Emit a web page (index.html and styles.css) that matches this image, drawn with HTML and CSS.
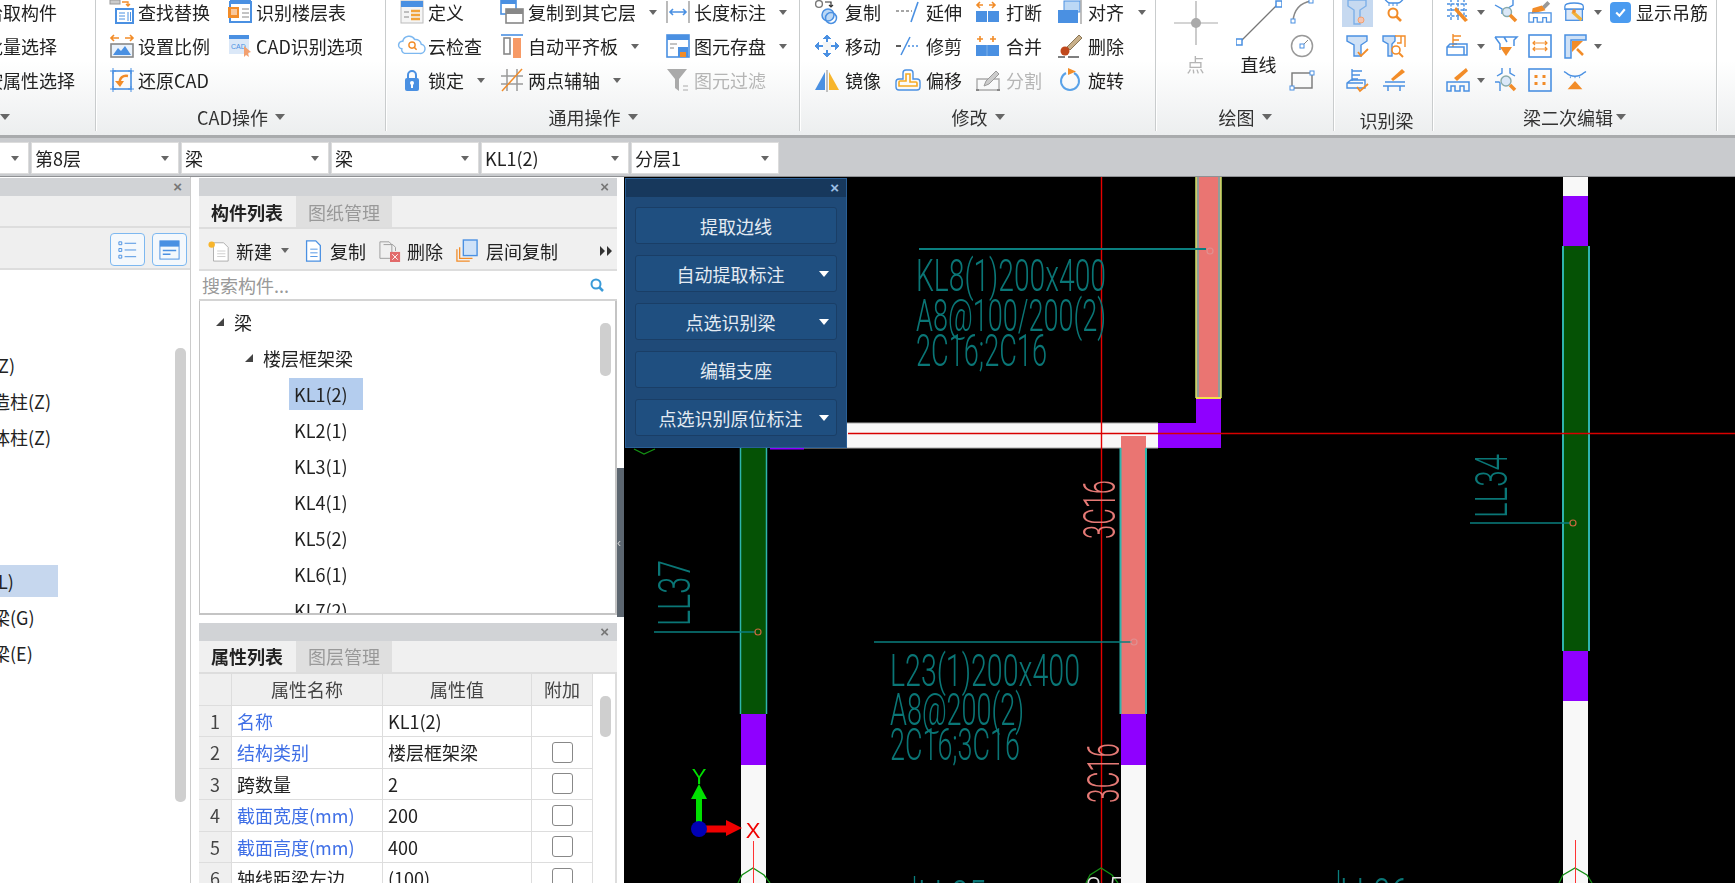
FILE: index.html
```html
<!DOCTYPE html>
<html lang="zh-CN">
<head>
<meta charset="utf-8">
<title>梁识别</title>
<link rel="stylesheet" href="styles.css">
</head>
<body>
<div class="app">
<header class="ribbon">
  <section class="rb-group g-sel">
    <div class="rb-grid">
      <div class="rb-item">拾取构件</div>
      <div class="rb-item">批量选择</div>
      <div class="rb-item">按属性选择</div>
    </div>
    <div class="rb-label">选择 <i class="caret"></i></div>
  </section>

  <section class="rb-group g-cad">
    <div class="rb-grid">
      <div class="rb-item"><svg class="ic" viewBox="0 0 24 24"><rect x="0" y="0" width="10" height="4" fill="#ccc" stroke="#999"/><path d="M12 2h6v4m-2-2l2 2 2-2" stroke="#f28c28" stroke-width="1.300"/><rect x="6" y="9" width="17" height="14" fill="#fff" stroke="#4a90e2" stroke-width="2"/><path d="M9 13h6M9 16h6M9 19h6M18 12v9M20.500 12v9" stroke="#4a90e2"/></svg><span>查找替换</span></div>
      <div class="rb-item"><svg class="ic" viewBox="0 0 24 24"><rect x="2" y="2" width="21" height="20" fill="#fff" stroke="#4a90e2" stroke-width="2"/><rect x="2" y="0" width="21" height="4" fill="#4a90e2"/><rect x="0" y="7" width="11" height="11" fill="#f28c28"/><rect x="3" y="9" width="6" height="6" fill="#f9c79a"/><path d="M14 9h7M14 13h7M14 17h7" stroke="#888"/></svg><span>识别楼层表</span></div>
      <div class="rb-item"><svg class="ic" viewBox="0 0 24 24"><path d="M1 4h8M4 1L1 4l3 3M23 4h-8M20 1l3 3-3 3" stroke="#f28c28" stroke-width="1.600"/><rect x="1" y="10" width="22" height="13" fill="#eaf2fb" stroke="#888" stroke-width="1.600"/><path d="M3 21l5-7 3 3 4-5 6 9z" fill="#4a90e2"/></svg><span>设置比例</span></div>
      <div class="rb-item"><svg class="ic" viewBox="0 0 24 24"><rect x="1" y="2" width="20" height="18" fill="#dbe8f8"/><rect x="1" y="1" width="20" height="4" fill="#4a90e2"/><text x="3" y="15" class="ic-t">CAD</text><path d="M16 12l7 6-3 1 1 4-3-2-2 2z" fill="#f2a070"/></svg><span>CAD识别选项</span></div>
      <div class="rb-item"><svg class="ic" viewBox="0 0 24 24"><rect x="3" y="3" width="18" height="18" stroke="#4a90e2" stroke-width="1.600"/><path d="M0 3h6M3 0v6M18 3h6M21 0v6M0 21h6M3 18v6M18 21h6M21 18v6" stroke="#4a90e2"/><path d="M18 8c-5-1-9 2-8 7" stroke="#f28c28" stroke-width="2.400"/><path d="M5 13h9l-4 6z" fill="#f28c28"/></svg><span>还原CAD</span></div>
      <div class="rb-item"></div>
    </div>
    <div class="rb-label">CAD操作 <i class="caret"></i></div>
  </section>

  <section class="rb-group g-gen">
    <div class="rb-grid">
      <div class="rb-item"><svg class="ic" viewBox="0 0 24 24"><rect x="1" y="1" width="22" height="22" fill="#f5f5f5" stroke="#bbb"/><rect x="1" y="1" width="22" height="6" fill="#4a90e2"/><path d="M4 12h5M4 17h5" stroke="#888"/><path d="M11 11h9M11 15h9M11 19h9" stroke="#f2a33a" stroke-width="2.400"/></svg><span>定义</span></div>
      <div class="rb-item"><svg class="ic" viewBox="0 0 24 24"><rect x="1" y="-2" width="15" height="16" stroke="#4a90e2" stroke-width="1.600" fill="#fff"/><rect x="1" y="-2" width="15" height="6" fill="#4a90e2"/><rect x="6" y="9" width="17" height="14" fill="#fff" stroke="#888" stroke-width="1.600"/><rect x="6" y="9" width="17" height="5" fill="#888"/></svg><span>复制到其它层</span><i class="caret"></i></div>
      <div class="rb-item"><svg class="ic" viewBox="0 0 24 24"><path d="M1 1v22M23 1v22" stroke="#aaa" stroke-width="1.600"/><path d="M4 12h16M7 9l-3 3 3 3M17 9l3 3-3 3" stroke="#4a90e2" stroke-width="1.600"/></svg><span>长度标注</span><i class="caret"></i></div>

      <div class="rb-item"><svg class="ic" viewBox="0 0 26 24"><path d="M2 15a4 4 0 0 1 1-8 7 7 0 0 1 13-2 6 6 0 0 1 7 5 5 5 0 0 1-2 10H5a4 4 0 0 1-3-5z" stroke="#7db8f0" stroke-width="1.600"/><circle cx="13" cy="11" r="3.400" stroke="#f28c28" stroke-width="1.500"/><path d="M15.500 13.500l2.500 2.500" stroke="#f28c28" stroke-width="1.600"/></svg><span>云检查</span></div>
      <div class="rb-item"><svg class="ic" viewBox="0 0 24 24"><path d="M1 1h22" stroke="#4a90e2" stroke-width="1.600"/><rect x="4" y="4" width="6" height="16" stroke="#888" stroke-width="1.600"/><rect x="13" y="4" width="8" height="20" fill="#f79a66"/></svg><span>自动平齐板</span><i class="caret"></i></div>
      <div class="rb-item"><svg class="ic" viewBox="0 0 24 24"><rect x="1" y="1" width="22" height="22" fill="#fff" stroke="#4a90e2" stroke-width="1.600"/><rect x="1" y="1" width="22" height="5" fill="#4a90e2"/><path d="M4 10h7M4 14h4" stroke="#888"/><rect x="12" y="13" width="10" height="10" fill="#4a90e2"/><rect x="14" y="18" width="6" height="5" fill="#f28c28"/></svg><span>图元存盘</span><i class="caret"></i></div>

      <div class="rb-item"><svg class="ic" viewBox="0 0 24 24"><path d="M8 11V7a4 4 0 0 1 8 0v4" stroke="#4a90e2" stroke-width="2"/><rect x="5" y="10" width="14" height="13" rx="2" fill="#4a90e2"/><circle cx="12" cy="15" r="2" fill="#fff"/><rect x="11" y="15" width="2" height="5" fill="#fff"/></svg><span>锁定</span><i class="caret"></i></div>
      <div class="rb-item"><svg class="ic" viewBox="0 0 24 24"><path d="M7 1v22M17 1v22M1 8h22M1 16h22" stroke="#999" stroke-width="1.500"/><path d="M2 23L22 1" stroke="#f28c28" stroke-width="1.500"/></svg><span>两点辅轴</span><i class="caret"></i></div>
      <div class="rb-item off"><svg class="ic" viewBox="0 0 24 24"><path d="M1 1h20l-8 10v12l-4-3v-9z" fill="#aaa"/><path d="M17 18h5M17 22h5" stroke="#aaa"/></svg><span>图元过滤</span></div>
    </div>
    <div class="rb-label">通用操作 <i class="caret"></i></div>
  </section>

  <section class="rb-group g-mod">
    <div class="rb-grid">
      <div class="rb-item"><svg class="ic" viewBox="0 0 26 24"><circle cx="5" cy="4" r="3.400" stroke="#777" stroke-width="1.400"/><path d="M11 2h6v5m-2-2l2 2 2-2" stroke="#333" stroke-width="1.200"/><circle cx="14" cy="15" r="6" fill="#bcd8f5" stroke="#4a90e2" stroke-width="1.500"/><circle cx="17" cy="18" r="5.500" stroke="#4a90e2" stroke-width="1.500"/></svg><span>复制</span></div>
      <div class="rb-item"><svg class="ic" viewBox="0 0 26 24"><path d="M1 11h16" stroke="#888" stroke-width="1.500" stroke-dasharray="3 2"/><path d="M23 2l-7 20" stroke="#4a90e2" stroke-width="1.600"/></svg><span>延伸</span></div>
      <div class="rb-item"><svg class="ic" viewBox="0 0 26 24"><path d="M2 5h6M5 2L2 5l3 3M20 5h-6M17 2l3 3-3 3" stroke="#f28c28" stroke-width="1.600"/><rect x="1" y="11" width="11" height="11" fill="#4a90e2"/><rect x="13" y="11" width="11" height="11" fill="#4a90e2"/></svg><span>打断</span></div>
      <div class="rb-item"><svg class="ic" viewBox="0 0 26 24"><rect x="7" y="1" width="16" height="11" fill="#bcd8f5" stroke="#4a90e2"/><rect x="1" y="10" width="20" height="13" fill="#4a90e2"/><path d="M24 -2v26" stroke="#aaa" stroke-width="1.500"/></svg><span>对齐</span><i class="caret"></i></div>

      <div class="rb-item"><svg class="ic" viewBox="0 0 26 24"><path d="M13 1v22M1 12h24" stroke="#4a90e2" stroke-width="2"/><path d="M9 5l4-4 4 4M9 19l4 4 4-4M5 8l-4 4 4 4M21 8l4 4-4 4" fill="#4a90e2" stroke="#4a90e2"/><rect x="9" y="8" width="8" height="8" fill="#f3f5f6"/></svg><span>移动</span></div>
      <div class="rb-item"><svg class="ic" viewBox="0 0 26 24"><path d="M1 12h5" stroke="#333" stroke-width="1.600"/><path d="M15 3L6 21" stroke="#4a90e2" stroke-width="1.600"/><path d="M13 12h12" stroke="#4a90e2" stroke-width="1.500" stroke-dasharray="2 2"/></svg><span>修剪</span></div>
      <div class="rb-item"><svg class="ic" viewBox="0 0 26 24"><path d="M2 5h6M5 2v6M15 5h6M18 2v6" stroke="#f28c28" stroke-width="1.600"/><rect x="1" y="11" width="23" height="11" fill="#4a90e2"/><path d="M12 11v11" stroke="#7db0e8"/></svg><span>合并</span></div>
      <div class="rb-item"><svg class="ic" viewBox="0 0 26 24"><path d="M1 23h7M11 23h11" stroke="#555" stroke-width="1.300"/><path d="M10 13l12-12 3 3-12 12z" fill="#c8b08a" stroke="#8a7555"/><circle cx="8" cy="17" r="4.500" fill="#c0481c"/></svg><span>删除</span></div>

      <div class="rb-item"><svg class="ic" viewBox="0 0 26 24"><path d="M11 4L1 22h10z" fill="#4a90e2"/><path d="M13 2v22" stroke="#888"/><path d="M15 4l10 18H15z" fill="#f7b52c"/></svg><span>镜像</span></div>
      <div class="rb-item"><svg class="ic" viewBox="0 0 26 24"><path d="M8 5a3 3 0 0 1 3-3h4a3 3 0 0 1 3 3v6h4a3 3 0 0 1 3 3v5a3 3 0 0 1-3 3H4a3 3 0 0 1-3-3v-5a3 3 0 0 1 3-3h4z" stroke="#4a90e2" stroke-width="1.400"/><path d="M11 6v7H5a1 1 0 0 0-1 1v4h18v-3a1 1 0 0 0-1-1h-6V6z" stroke="#f5ab25" stroke-width="1.600"/></svg><span>偏移</span></div>
      <div class="rb-item off"><svg class="ic" viewBox="0 0 26 24"><path d="M2 11h22v11H2z" stroke="#aaa" stroke-width="1.400"/><path d="M1 22h3M22 22h3" stroke="#888" stroke-width="2"/><path d="M9 18l2-5L21 3l3 3-10 10z" fill="#ccc" stroke="#999"/></svg><span>分割</span></div>
      <div class="rb-item"><svg class="ic" viewBox="0 0 26 24"><path d="M9 5a9 9 0 1 0 8 0" stroke="#5aa2e8" stroke-width="2"/><path d="M11 0l8 3.500-8 3.500z" fill="#f28c28"/></svg><span>旋转</span></div>
    </div>
    <div class="rb-label">修改 <i class="caret"></i></div>
  </section>

  <section class="rb-group g-draw">
    <div class="rb-grid">
      <div class="big off"><svg class="ic-big" viewBox="0 0 46 46"><path d="M23 1v44M1 23h44" stroke="#aaa" stroke-width="1.200"/><circle cx="23" cy="23" r="5" fill="#aaa"/></svg><span>点</span></div>
      <div class="big"><svg class="ic-big" viewBox="0 0 46 46"><path d="M3 43L43 3" stroke="#777" stroke-width="1.200"/><rect x="0" y="39" width="6" height="6" fill="#fff" stroke="#4a90e2" stroke-width="1.500"/><rect x="40" y="1" width="6" height="6" fill="#fff" stroke="#4a90e2" stroke-width="1.500"/></svg><span>直线</span></div>
      <div class="rb-item"><svg class="ic" viewBox="0 0 24 24"><path d="M3 21C4 10 10 3 21 1" stroke="#888" stroke-width="1.500"/><rect x="1" y="19" width="4" height="4" fill="#fff" stroke="#4a90e2"/><rect x="19" y="-1" width="4" height="4" fill="#fff" stroke="#4a90e2"/></svg></div>
      <div class="rb-item"><svg class="ic" viewBox="0 0 24 24"><circle cx="12" cy="12" r="10.500" stroke="#999" stroke-width="1.500"/><path d="M12 12l6-6" stroke="#888"/><rect x="10" y="10" width="4" height="4" fill="#fff" stroke="#4a90e2"/></svg></div>
      <div class="rb-item"><svg class="ic" viewBox="0 0 24 24"><rect x="2" y="5" width="20" height="15" stroke="#777" stroke-width="1.400"/><rect x="0" y="18" width="4" height="4" fill="#fff" stroke="#4a90e2"/><rect x="20" y="3" width="4" height="4" fill="#fff" stroke="#4a90e2"/></svg></div>
    </div>
    <div class="rb-label">绘图 <i class="caret"></i></div>
  </section>

  <section class="rb-group g-rec">
    <div class="rb-grid">
      <div class="rb-item active"><svg class="ic" viewBox="0 0 24 24"><path d="M3 -2h18v6l-6 4v14H9V8L3 4z" stroke="#7db0e8" stroke-width="1.400"/><circle cx="16" cy="18" r="3" fill="#f4c4b0" stroke="#f2a070"/></svg></div>
      <div class="rb-item"><svg class="ic" viewBox="0 0 24 24"><path d="M2 -2c2 3 4 5 6 5h8c2 0 4-2 6-5" stroke="#4a90e2" stroke-width="1.400"/><path d="M7 3v3M11 3v3M15 3v3" stroke="#4a90e2"/><circle cx="11" cy="13" r="4.500" stroke="#f28c28" stroke-width="2"/><path d="M14 16l5 5" stroke="#f28c28" stroke-width="2.600"/></svg></div>
      <div class="rb-item"><svg class="ic" viewBox="0 0 24 24"><path d="M1 2h20v5l-6 4v11H8V11L1 7z" fill="#cfe1f6" stroke="#4a90e2" stroke-width="1.400"/><path d="M12 18l3 4 7-7" stroke="#f28c28" stroke-width="1.800"/></svg></div>
      <div class="rb-item"><svg class="ic" viewBox="0 0 24 24"><path d="M1 2h12v5l-3 3v12H6V10L1 7z" fill="#cfe1f6" stroke="#4a90e2" stroke-width="1.400"/><path d="M13 2h10v11M19 2v7h-4" stroke="#f28c28" stroke-width="1.400"/><circle cx="14" cy="16" r="4" fill="#fff" stroke="#f28c28" stroke-width="1.600"/><path d="M17 19l4 4" stroke="#f28c28" stroke-width="2"/></svg></div>
      <div class="rb-item"><svg class="ic" viewBox="0 0 24 24"><path d="M6 1v12M6 3h10M6 7h8M6 11h6" stroke="#4a90e2" stroke-width="1.400"/><path d="M1 15l4-3h14v8H1zM1 15h16" stroke="#4a90e2" stroke-width="1.400"/><path d="M11 19l3 4 8-7" stroke="#f28c28" stroke-width="1.800"/></svg></div>
      <div class="rb-item"><svg class="ic" viewBox="0 0 24 24"><path d="M9 11L20 1l3 3-12 9z" fill="#f28c28"/><path d="M3 14h20M1 18h22M6 18v5M18 18v5" stroke="#4a90e2" stroke-width="1.500"/></svg></div>
    </div>
    <div class="rb-label plain">识别梁</div>
  </section>

  <section class="rb-group g-edit">
    <div class="rb-grid">
      <div class="rb-item"><svg class="ic" viewBox="0 0 24 24"><path d="M5 -1v21M12 -1v21M18 -1v21M1 4h20M1 10h20M1 16h20" stroke="#4a90e2" stroke-width="1.400" stroke-dasharray="3 1.500"/><path d="M10 7l12 13-3 2L8 10z" fill="#f28c28"/></svg><i class="caret"></i></div>
      <div class="rb-item"><svg class="ic" viewBox="0 0 24 24"><path d="M1 -1h18v6l-5 3M1 5l7 4v5" stroke="#4a90e2" stroke-width="1.400"/><circle cx="13" cy="12" r="4.500" fill="#dbe8f8" stroke="#8aa" stroke-width="1.400"/><path d="M16 15l6 6" stroke="#f28c28" stroke-width="3.500"/></svg></div>
      <div class="rb-item"><svg class="ic" viewBox="0 0 26 24"><path d="M15 6l6-6 3 3-6 6z" fill="#999"/><path d="M5 8l10-3 4 5-15 4z" fill="#f28c28"/><path d="M1 23V13h24v10h-5v-5h-4v5h-6v-5H6v5z" stroke="#4a90e2" stroke-width="1.400"/></svg></div>
      <div class="rb-item"><svg class="ic" viewBox="0 0 26 24"><path d="M2 6c0-5 20-5 20 0v3H2z" stroke="#4a90e2" stroke-width="1.400"/><rect x="3" y="9" width="18" height="12" fill="#dbe8f8" stroke="#4a90e2" stroke-width="1.400"/><path d="M11 10l10 9-2 3-10-9z" fill="#f2b23a"/><circle cx="12" cy="11" r="2" fill="#f28c28"/></svg><i class="caret"></i></div>
      <label class="check"><i class="box"><svg viewBox="0 0 14 14"><path d="M3 7l3 3 5-6" stroke="#fff" stroke-width="2"/></svg></i><span>显示吊筋</span></label>

      <div class="rb-item"><svg class="ic" viewBox="0 0 24 24"><path d="M7 0v13M7 2h8M7 6h6M7 10h4" stroke="#f28c28" stroke-width="1.400"/><path d="M1 13l3-3h17v11H1zM1 13h17v8" stroke="#4a90e2" stroke-width="1.500"/></svg><i class="caret"></i></div>
      <div class="rb-item"><svg class="ic" viewBox="0 0 24 24"><path d="M1 3h22l-3 3v6M1 3l5 7v6M10 3l3 5" stroke="#4a90e2" stroke-width="1.500"/><path d="M6 13h12l-6 9z" fill="#f28c28"/></svg></div>
      <div class="rb-item"><svg class="ic" viewBox="0 0 24 24"><rect x="1" y="1" width="22" height="22" stroke="#4a90e2" stroke-width="1.600"/><path d="M5 9h14M5 15h14M7 7L5 9l2 2M17 7l2 2-2 2M7 13l-2 2 2 2M17 13l2 2-2 2" stroke="#f28c28" stroke-width="1.200"/></svg></div>
      <div class="rb-item"><svg class="ic" viewBox="0 0 24 24"><path d="M2 24V1h21v5H8v18z" fill="#cfe1f6" stroke="#4a90e2" stroke-width="1.500"/><path d="M9 7h11L9 18z" fill="#f28c28"/><path d="M14 15l6 6" stroke="#f28c28" stroke-width="2.500"/></svg><i class="caret"></i></div>
      <div class="rb-item"></div>

      <div class="rb-item"><svg class="ic" viewBox="0 0 24 24"><path d="M8 10L20 0l2 3-11 10z" fill="#f28c28"/><path d="M1 23V14h22v9h-5v-5h-4v5H9v-5H5v5z" stroke="#4a90e2" stroke-width="1.500"/></svg><i class="caret"></i></div>
      <div class="rb-item"><svg class="ic" viewBox="0 0 24 24"><path d="M8 0v5L3 8M16 0v5l5 3M1 14h4l1 1v8" stroke="#4a90e2" stroke-width="1.400"/><circle cx="12" cy="13" r="5" fill="#dbe8f8" stroke="#8aa" stroke-width="1.400"/><path d="M16 17l5 5" stroke="#f28c28" stroke-width="3.500"/></svg></div>
      <div class="rb-item"><svg class="ic" viewBox="0 0 24 24"><rect x="1" y="1" width="22" height="22" stroke="#4a90e2" stroke-width="1.600"/><rect x="6.500" y="7" width="3" height="3" fill="#f28c28"/><rect x="14.500" y="7" width="3" height="3" fill="#f28c28"/><rect x="6.500" y="14" width="3" height="3" fill="#f28c28"/><rect x="14.500" y="14" width="3" height="3" fill="#f28c28"/></svg></div>
      <div class="rb-item"><svg class="ic" viewBox="0 0 26 24"><path d="M1 3c3 0 3 5 12 5s9-5 12-5" stroke="#4a90e2" stroke-width="1.500"/><path d="M8 8v2M13 8v2M18 8v2" stroke="#4a90e2"/><path d="M5 22l8-9 8 9z" fill="#f28c28"/></svg></div>
      <div class="rb-item"></div>
    </div>
    <div class="rb-label">梁二次编辑 <i class="caret"></i></div>
  </section>
</header>

<nav class="selectors">
  <div class="select first"><span></span></div>
  <div class="select"><span>第8层</span></div>
  <div class="select"><span>梁</span></div>
  <div class="select"><span>梁</span></div>
  <div class="select"><span>KL1(2)</span></div>
  <div class="select"><span>分层1</span></div>
</nav>

<main class="workspace">
  <aside class="nav-panel">
    <div class="panel-head"><b class="x">×</b></div>
    <div class="nav-blank"></div>
    <div class="nav-tools">
      <span class="view-btn"><svg viewBox="0 0 24 24"><path d="M3 4h3v3H3zM3 11h3v3H3zM3 18h3v3H3z" stroke="#4a90e2"/><path d="M9 5.500h12M9 12.500h12M9 19.500h12" stroke="#4a90e2"/></svg></span>
      <span class="view-btn"><svg viewBox="0 0 24 24"><rect x="2" y="3" width="20" height="19" stroke="#4a90e2"/><rect x="2" y="3" width="20" height="6" fill="#4a90e2"/><path d="M5 13h14M5 17h8" stroke="#4a90e2" stroke-width="1.500"/></svg></span>
    </div>
    <ul class="nav-list">
      <li>柱(Z)</li>
      <li>构造柱(Z)</li>
      <li>砌体柱(Z)</li>
      <li class="spacer"></li>
      <li class="spacer"></li>
      <li class="spacer"></li>
      <li class="sel">梁(L)</li>
      <li>连梁(G)</li>
      <li>圈梁(E)</li>
    </ul>
    <i class="thumb nav-thumb"></i>
  </aside>

  <div class="mid">
    <section class="list-panel">
      <div class="panel-head"><b class="x">×</b></div>
      <div class="tabs"><span class="tab on">构件列表</span><span class="tab">图纸管理</span></div>
      <div class="list-tools">
        <span class="tool t-new"><svg class="ic2" viewBox="0 0 24 24"><path d="M6 3h11l5 5v15H6z" fill="#fff" stroke="#aaa"/><path d="M10 12h9M10 15h9M10 18h9" stroke="#ccc"/><circle cx="4" cy="5" r="3.500" fill="#f7b52c"/></svg>新建<i class="caret"></i></span>
        <span class="tool t-copy"><svg class="ic2" viewBox="0 0 24 24"><path d="M5 1h10l5 5v17H5z" fill="#fff" stroke="#4a90e2" stroke-width="1.400"/><path d="M9 10h8M9 14h8M9 18h8" stroke="#4a90e2"/></svg>复制</span>
        <span class="tool t-del"><svg class="ic2" viewBox="0 0 24 24"><path d="M1 2h10l3 3v15H1z" stroke="#999"/><path d="M5 5h10l3 3v4" stroke="#999"/><rect x="12" y="13" width="11" height="11" fill="#e26a6a"/><path d="M14.500 15.500l6 6M20.500 15.500l-6 6" stroke="#fff"/></svg>删除</span>
        <span class="tool t-floor"><svg class="ic2" viewBox="0 0 24 24"><path d="M1 10v13h14M4 8v12h14" stroke="#f28c28" stroke-width="1.400"/><rect x="8" y="0" width="15" height="17" fill="#cfe2f8" stroke="#4a90e2" stroke-width="1.500"/></svg>层间复制</span>
        <svg class="more" viewBox="0 0 12 10"><path d="M0 0l5 5-5 5zM7 0l5 5-5 5z" fill="#333"/></svg>
      </div>
      <div class="search"><span>搜索构件...</span><svg viewBox="0 0 16 16"><circle cx="7" cy="7" r="4.500" stroke="#3a9bd8" stroke-width="2"/><path d="M10 10l4 4" stroke="#3a9bd8" stroke-width="2.500"/></svg></div>
      <div class="tree">
        <div class="node lv0"><i class="tri"></i>梁</div>
        <div class="node lv1"><i class="tri"></i>楼层框架梁</div>
        <div class="node lv2"><span class="leaf sel">KL1(2)</span></div>
        <div class="node lv2"><span class="leaf">KL2(1)</span></div>
        <div class="node lv2"><span class="leaf">KL3(1)</span></div>
        <div class="node lv2"><span class="leaf">KL4(1)</span></div>
        <div class="node lv2"><span class="leaf">KL5(2)</span></div>
        <div class="node lv2"><span class="leaf">KL6(1)</span></div>
        <div class="node lv2"><span class="leaf">KL7(2)</span></div>
        <i class="thumb tree-thumb"></i>
      </div>
    </section>

    <section class="prop-panel">
      <div class="panel-head"><b class="x">×</b></div>
      <div class="tabs"><span class="tab on">属性列表</span><span class="tab">图层管理</span></div>
      <div class="prop-body">
        <div class="prop-grid">
          <div class="th"></div><div class="th">属性名称</div><div class="th">属性值</div><div class="th">附加</div>
          <div class="num">1</div><div class="td link">名称</div><div class="td">KL1(2)</div><div class="td"></div>
          <div class="num">2</div><div class="td link">结构类别</div><div class="td">楼层框架梁</div><div class="td"><i class="cb"></i></div>
          <div class="num">3</div><div class="td">跨数量</div><div class="td">2</div><div class="td"><i class="cb"></i></div>
          <div class="num">4</div><div class="td link">截面宽度(mm)</div><div class="td">200</div><div class="td"><i class="cb"></i></div>
          <div class="num">5</div><div class="td link">截面高度(mm)</div><div class="td">400</div><div class="td"><i class="cb"></i></div>
          <div class="num">6</div><div class="td">轴线距梁左边...</div><div class="td">(100)</div><div class="td"><i class="cb"></i></div>
        </div>
        <i class="thumb prop-thumb"></i>
      </div>
    </section>
  </div>

  <div class="splitter"><i class="s-gray">‹</i></div>

  <section class="canvas">
    <svg class="cad" viewBox="624 177 1111 706" preserveAspectRatio="none">
      <!-- horizontal beam -->
      <rect x="800" y="423" width="358" height="25" fill="#f8f8f8"/>
      <path d="M800 423h358M800 448h358" stroke="#aaa"/>
      <rect x="770" y="448" width="34" height="1.500" fill="#8f00ff"/>
      <path d="M634 449l10 5 11-5" stroke="#149014" stroke-width="1.300"/>
      <path d="M1158 423h38v-25h25v50h-63z" fill="#8f00ff"/>
      <!-- upper pink -->
      <rect x="1196" y="177" width="25" height="221" fill="#ea7572"/>
      <path d="M1196 177v221M1221 177v221" stroke="#c8e66a" stroke-width="1.500"/>
      <path d="M1198 177v221M1219 177v221" stroke="#39c6bd" stroke-width="1"/>
      <path d="M1196 398h25" stroke="#f2e34a" stroke-width="2"/>
      <!-- lower pink -->
      <rect x="1121" y="436" width="25" height="278" fill="#ea7572"/>
      <path d="M1120.500 448v266M1146 448v266" stroke="#2fb5ad" stroke-width="2"/>
      <rect x="1121" y="714" width="25" height="51" fill="#8f00ff"/>
      <rect x="1121" y="765" width="25" height="118" fill="#f8f8f8"/>
      <!-- left green -->
      <rect x="741" y="448" width="26" height="266" fill="#055205"/>
      <path d="M740.500 448v266M766.500 448v266" stroke="#2fb5ad" stroke-width="1.500"/>
      <rect x="741" y="714" width="25" height="51" fill="#8f00ff"/>
      <rect x="741" y="765" width="25" height="118" fill="#f8f8f8"/>
      <!-- right column -->
      <rect x="1563" y="177" width="25" height="19" fill="#f8f8f8"/>
      <rect x="1563" y="196" width="25" height="50" fill="#8f00ff"/>
      <rect x="1563" y="246" width="26" height="405" fill="#055205"/>
      <path d="M1563 246v405M1589 246v405" stroke="#2fb5ad" stroke-width="2"/>
      <rect x="1563" y="651" width="25" height="50" fill="#8f00ff"/>
      <rect x="1563" y="701" width="25" height="182" fill="#f8f8f8"/>
      <!-- cross-hair -->
      <path d="M1101.500 177v706" stroke="#e60000" stroke-width="1.400"/>
      <path d="M848 433.500h887" stroke="#d80000" stroke-width="1.600"/>
      <!-- leaders -->
      <g stroke="#0a7f7f" fill="none" stroke-width="1.300">
        <path d="M919 249h287" stroke-width="2"/>
        <path d="M654 632h101"/>
        <path d="M874 642h258"/>
        <path d="M1470 523h100"/>
        <path d="M1338.500 870v14M914.500 876v8"/>
      </g>
      <g fill="none" stroke="#c7693e" stroke-width="1.200">
        <circle cx="758" cy="632" r="3"/>
        <circle cx="1573" cy="523" r="3"/>
        <circle cx="1210" cy="251" r="3" stroke="#e09090"/>
        <circle cx="1134" cy="642" r="3" stroke="#e09090"/>
      </g>
      <!-- annotation text -->
      <g class="cad-text">
        <text x="916" y="291" textLength="190" lengthAdjust="spacingAndGlyphs">KL8(1)200x400</text>
        <text x="916" y="331" textLength="190" lengthAdjust="spacingAndGlyphs">A8@100/200(2)</text>
        <text x="916" y="366" textLength="131" lengthAdjust="spacingAndGlyphs">2C16;2C16</text>
        <text x="890" y="686" textLength="190" lengthAdjust="spacingAndGlyphs">L23(1)200x400</text>
        <text x="890" y="725" textLength="134" lengthAdjust="spacingAndGlyphs">A8@200(2)</text>
        <text x="890" y="760" textLength="130" lengthAdjust="spacingAndGlyphs">2C16;3C16</text>
        <text transform="translate(690 626) rotate(-90)" textLength="66" lengthAdjust="spacingAndGlyphs">LL37</text>
        <text transform="translate(1507 518) rotate(-90)" textLength="64" lengthAdjust="spacingAndGlyphs">LL34</text>
        <text x="1340" y="910" textLength="68" lengthAdjust="spacingAndGlyphs">LL26</text>
        <text x="918" y="912" textLength="68" lengthAdjust="spacingAndGlyphs">LL35</text>
      </g>
      <g class="cad-text pink">
        <text transform="translate(1115 539) rotate(-90)" textLength="59" lengthAdjust="spacingAndGlyphs">3C16</text>
        <text transform="translate(1119 803) rotate(-90)" textLength="60" lengthAdjust="spacingAndGlyphs">3C16</text>
      </g>
      <!-- axis marks -->
      <g fill="none" stroke="#149014" stroke-width="1.300">
        <path d="M738 883l4-8 11-7 11 7 6 8"/>
        <path d="M1086 883l4-8 11-7 11 7 6 8"/>
        <path d="M1559 883l4-8 12-7 12 7 5 8"/>
      </g>
      <text class="axis-no" x="1086" y="897">2.5</text>
      <path d="M753.500 841v42M1575.500 840v43" stroke="#f33"/>
      <!-- UCS -->
      <path d="M699 830v-36" stroke="#00e000" stroke-width="6"/>
      <path d="M699 784l-8 15h16z" fill="#00e000"/>
      <path d="M699 829h30" stroke="#f00000" stroke-width="7"/>
      <path d="M742 828l-16-8v16z" fill="#f00000"/>
      <circle cx="699" cy="829" r="8" fill="#0000b4"/>
      <text class="ucs y" x="699" y="784">Y</text>
      <text class="ucs x" x="753" y="838">X</text>
    </svg>

    <div class="float">
      <div class="float-head"><b class="x">×</b></div>
      <div class="float-body">
        <button class="fbtn"><span>提取边线</span></button>
        <button class="fbtn"><span>自动提取标注</span><i></i></button>
        <button class="fbtn"><span>点选识别梁</span><i></i></button>
        <button class="fbtn"><span>编辑支座</span></button>
        <button class="fbtn"><span>点选识别原位标注</span><i></i></button>
      </div>
    </div>
  </section>
</main>
</div>
</body>
</html>
```

FILE: styles.css
```css
* { box-sizing: border-box; }
html, body { margin: 0; height: 100%; overflow: hidden; background: #fff; }
.app {
  width: 1735px; height: 883px; overflow: hidden;
  display: flex; flex-direction: column;
  font: 18px/24px "Noto Sans CJK SC", "Noto Sans", sans-serif;
  color: #222;
  filter: blur(.5px);
}
svg { fill: none; display: block; }
i { font-style: normal; }

/* ribbon */
.ribbon {
  height: 138px; flex: none; display: flex; overflow: hidden;
  background: linear-gradient(#fff 45%, #eceeef 100%);
  border-bottom: 3px solid #a9abad;
}
.rb-group { flex: none; height: 135px; display: flex; flex-direction: column; position: relative; }
.rb-group::after { content: ""; position: absolute; right: 0; top: 0; bottom: 4px; width: 1px; background: #c9cccd; box-shadow: 1px 0 0 #fff; }
.rb-grid { height: 103px; margin-top: -5px; display: grid; grid-auto-rows: 34px; }
.rb-item { display: flex; align-items: center; gap: 4px; height: 34px; white-space: nowrap; }
.rb-item.off, .big.off { color: #b5b5b5; }
.rb-item.active { background: #c6d9f0; width: 31px; height: 27px; margin: 5px 0 0 -4px; padding-left: 3px; overflow: hidden; }
.ic { width: 24px; height: 26px; flex: none; overflow: visible; }
.ic-t { font: 7px "Liberation Sans", sans-serif; fill: #4a90e2; }
.caret { display: inline-block; width: 0; height: 0; margin-left: 9px; border: 4px solid transparent; border-top: 5px solid #666; border-bottom: 0; vertical-align: middle; flex: none; }
.rb-label { height: 37px; display: flex; align-items: center; justify-content: center; color: #333; white-space: nowrap; padding-right: 14px; }
.rb-label .caret { margin-left: 7px; border-width: 5px; border-top-width: 6px; border-bottom-width: 0; }
.rb-label.plain { padding: 6px 6px 0 0; }

.g-sel { width: 222px; margin-left: -126px; padding-left: 111px; }
.g-sel .rb-label { justify-content: flex-start; padding: 0; margin-left: -28px; }
.g-cad { width: 290px; padding-left: 14px; }
.g-cad .rb-grid { grid-template-columns: 118px 1fr; }
.g-gen { width: 414px; padding-left: 14px; }
.g-gen .rb-grid { grid-template-columns: 100px 166px 1fr; }
.g-mod { width: 356px; padding-left: 14px; }
.g-mod .rb-grid { grid-template-columns: 81px 80px 82px 1fr; }
.g-mod .ic { width: 26px; }
.g-mod .rb-item { gap: 5px; }
.g-draw { width: 178px; padding-left: 8px; }
.g-draw .rb-label { padding-right: 8px; }
.g-draw .rb-grid { grid-template-columns: 63px 63px 1fr; }
.big { grid-row: span 3; display: flex; flex-direction: column; align-items: center; gap: 6px; padding-top: 5px; }
.ic-big { width: 46px; height: 46px; }
.g-rec { width: 99px; padding-left: 12px; }
.g-rec .rb-grid { grid-template-columns: 36px 36px; }
.g-edit { width: 284px; padding-left: 13px; }
.g-edit .rb-grid { grid-template-columns: 48px 34px 35px 47px 1fr; }
.g-edit .caret { margin-left: 3px; }
.check { display: flex; align-items: center; gap: 5px; height: 34px; white-space: nowrap; }
.box { width: 21px; height: 21px; background: #4a9bf0; border-radius: 4px; padding: 3px; }

/* selector bar */
.selectors { height: 39px; flex: none; display: flex; gap: 2px; padding-top: 4px; background: #c9cbce; border-bottom: 1px solid #8f9194; }
.select { width: 148px; height: 32px; background: #fff; border: 1px solid #dcdcdc; display: flex; align-items: center; justify-content: space-between; padding: 0 9px 0 3px; }
.select.first { width: 29px; border-left: 0; }
.select::after { content: ""; border: 4px solid transparent; border-top: 5px solid #666; border-bottom: 0; }

/* workspace */
.workspace { flex: 1; min-height: 0; display: flex; }
.panel-head { height: 18px; margin-top: 1px; background: #d1d3d6; display: flex; align-items: center; justify-content: flex-end; padding-right: 8px; flex: none; }
.x { font: 700 15px/18px "Liberation Sans", sans-serif; color: #777; }

.nav-panel { width: 191px; flex: none; margin-right: 8px; position: relative; border-right: 1px solid #ccc; background: #fff; }
.nav-blank { height: 32px; background: #efefef; border-bottom: 2px solid #ddd; }
.nav-tools { height: 42px; background: #efefef; border-bottom: 2px solid #ddd; display: flex; justify-content: flex-end; gap: 7px; padding: 5px 3px 0 0; }
.view-btn { width: 35px; height: 33px; border: 1.500px solid #7db8f0; border-radius: 4px; padding: 4px 5px; background: #f4f8fc; }
.nav-list { list-style: none; margin: 0; padding: 77px 0 0; }
.nav-list li { height: 36px; line-height: 36px; margin-left: -26px; padding-left: 0; white-space: nowrap; }
.nav-list li.sel { background: linear-gradient(#c6d7ee, #c6d7ee) 26px 2px / 58px 32px no-repeat; }
.thumb { position: absolute; display: block; background: #cfcfcf; border-radius: 5px; width: 11px; }
.nav-thumb { left: 175px; top: 171px; height: 454px; }

.mid { width: 418px; flex: none; display: flex; flex-direction: column; gap: 7px; }
.list-panel { height: 438px; flex: none; display: flex; flex-direction: column; }
.prop-panel { flex: 1; min-height: 0; display: flex; flex-direction: column; }
.tabs { height: 33px; flex: none; display: flex; gap: 1px; background: #f0f0f0; border-bottom: 2px solid #ddd; font-weight: 400; }
.tab { width: 96px; text-align: center; line-height: 31px; background: #dfdfdf; color: #999; }
.tab.on { background: #f0f0f0; color: #222; font-weight: 700; }
.list-panel .tab { line-height: 33px; }

.list-tools { height: 42px; flex: none; display: flex; align-items: center; padding-top: 3px; background: #f0f0f0; border-bottom: 2px solid #ddd; }
.tool { display: flex; align-items: center; gap: 6px; white-space: nowrap; }
.tool .caret { margin-left: 3px; }
.ic2 { width: 22px; height: 24px; flex: none; overflow: visible; }
.t-new { margin-left: 9px; width: 94px; }
.t-copy { width: 77px; }
.t-del { width: 77px; }
.t-floor { gap: 8px; }
.more { width: 12px; height: 10px; margin-left: auto; margin-right: 5px; }
.search { height: 30px; flex: none; display: flex; align-items: center; justify-content: space-between; padding: 0 12px 0 3px; color: #999; border-bottom: 2px solid #d4d4d4; background: #fff; }
.search svg { width: 16px; height: 16px; }
.tree { flex: 1; min-height: 0; overflow: hidden; position: relative; border: 1px solid #c4c4c4; border-width: 0 2px 2px 1px; padding-top: 3px; background: #fff; }
.node { height: 36px; display: flex; align-items: center; white-space: nowrap; }
.tri { width: 0; height: 0; border-style: solid; border-width: 0 0 8px 8px; border-color: transparent transparent #444 transparent; margin-right: 10px; }
.lv0 { padding-left: 16px; }
.lv1 { padding-left: 45px; }
.lv2 { padding-left: 89px; }
.leaf { display: block; width: 74px; height: 32px; line-height: 32px; padding-left: 5px; }
.leaf.sel { background: #b4cdee; }
.tree-thumb { left: 400px; top: 22px; height: 53px; }

.prop-body { flex: 1; min-height: 0; position: relative; overflow: hidden; background: #fff; border-right: 2px solid #ddd; }
.prop-grid { width: 394px; display: grid; grid-template-columns: 33px 151px 149px 61px; grid-auto-rows: 31.500px; }
.th, .num, .td { display: flex; align-items: center; border-right: 1.500px solid #ddd; border-bottom: 1.500px solid #ddd; white-space: nowrap; }
.th { background: #efefef; justify-content: center; color: #444; }
.num { background: #efefef; justify-content: center; color: #444; }
.td { padding-left: 5px; }
.td:nth-child(4n) { justify-content: center; padding: 0; }
.link { color: #3f6fe6; }
.cb { width: 21px; height: 21px; border: 1.500px solid #888; border-radius: 3px; background: #fff; }
.prop-thumb { left: 401px; top: 22px; height: 41px; }

.splitter { width: 7px; flex: none; padding-top: 291px; }
.s-gray { display: block; height: 149px; background: #5c6670; color: #ccc; font: 12px/150px "Liberation Sans", sans-serif; }

/* canvas */
.canvas { flex: 1; min-width: 0; position: relative; background: #000; overflow: hidden; }
.cad { width: 100%; height: 100%; }
.cad-text text { font: 300 45px "Roboto", sans-serif; fill: #0a7676; }
.cad-text.pink text { fill: #e57a76; }
.axis-no { font: 300 28px "Roboto", sans-serif; fill: #e8e8e8; }
.ucs { font: 300 22px "Liberation Sans", sans-serif; text-anchor: middle; }
.ucs.y { fill: #00e000; }
.ucs.x { fill: #f00000; }

.float { position: absolute; left: 1px; top: 1px; width: 222px; height: 270px; background: #1f4a78; border: 1px solid #2a5f96; display: flex; flex-direction: column; }
.float-head { height: 18px; flex: none; background: #17385c; display: flex; align-items: center; justify-content: flex-end; padding-right: 7px; }
.float-head .x { color: #9fc0e6; }
.float-body { display: flex; flex-direction: column; gap: 11px; padding: 10px 9px 0; }
.fbtn { height: 37px; padding: 0; display: flex; align-items: center; background: #1f4f80; border: 1px solid #1a3e66; border-radius: 3px; color: #e4ebf3; font: inherit; }
.fbtn span { flex: 1; text-align: center; }
.fbtn i { width: 0; height: 0; margin: 0 7px 0 -6px; border: 5px solid transparent; border-top: 6px solid #fff; border-bottom: 0; }
```
